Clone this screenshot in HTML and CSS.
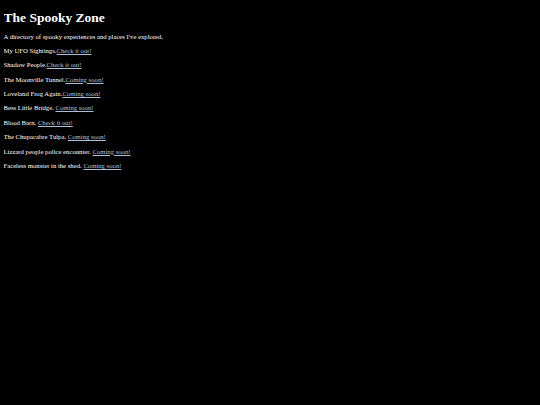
FILE: index.html
```html
<!DOCTYPE html>
<html lang="en">
<head>
    <meta charset="UTF-8">
    <meta name="viewport" content="width=device-width, initial-scale=1.0">
    <title>The Spooky Zone</title>
    <link rel="stylesheet" href="styles.css">
</head>
<body>

    <h1>The Spooky Zone</h1>
    <p>A directory of spooky experiences and places I've explored.</p>

    <p>My UFO Sightings.<a href="#">Check it out!</a></p>
    <p>Shadow People.<a href="#">Check it out!</a></p>
    <p>The Moonville Tunnel.<a href="#">Coming soon!</a></p>
    <p>Loveland Frog Again.<a href="#">Coming soon!</a></p>
    <p>Bess Little Bridge. <a href="#">Coming soon!</a></p>
    <p>Blood Barn. <a href="#">Check it out!</a></p>
    <p>The Chupacabre Tulpa. <a href="#">Coming soon!</a></p>
    <p>Lizzard people police encounter. <a href="#">Coming soon!</a></p>
    <p>Faceless monster in the shed. <a href="#">Coming soon!</a></p>

</body>
</html>
```

FILE: styles.css
```css
body {
    font-family: "Liberation Serif", "Times New Roman", serif;
    background-color: black;
    color: white;
    margin: 3.5px;
    font-size: 6.7px;
}
h1 {
    font-size: 13.5px;
    margin: 6px 0 7px;
}
p {
    margin: 6.4px 0;
    line-height: 8px;
}
a {
    color: #a9c2da;
}
```
